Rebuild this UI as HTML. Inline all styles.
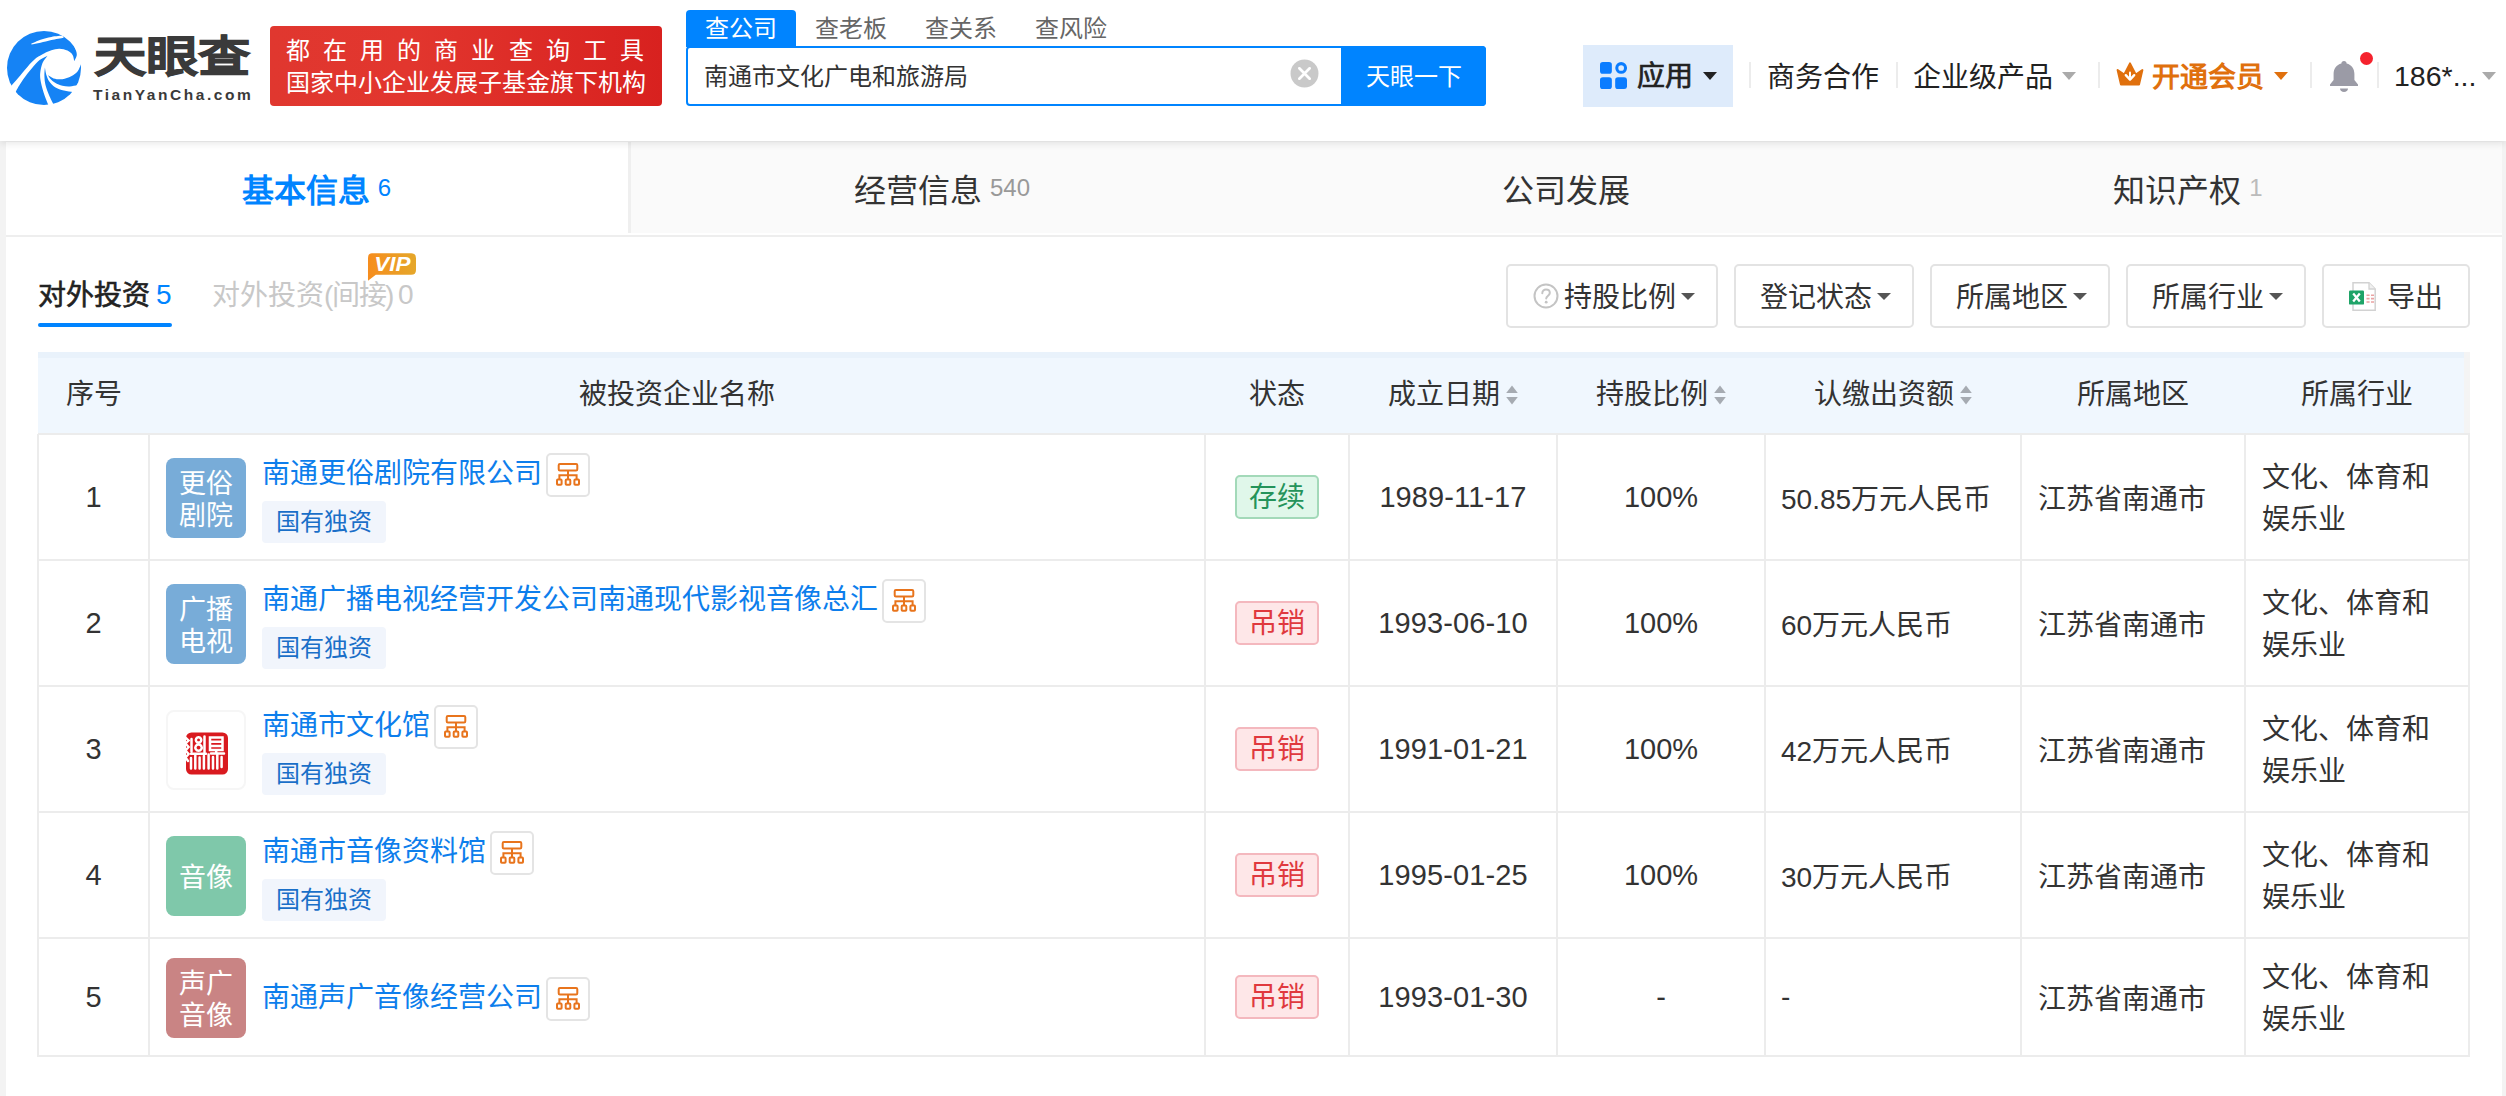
<!DOCTYPE html>
<html lang="zh-CN">
<head>
<meta charset="utf-8">
<title>天眼查 - 南通市文化广电和旅游局 - 对外投资</title>
<style>
*{box-sizing:border-box;margin:0;padding:0}
html,body{width:2506px;height:1096px;overflow:hidden;background:#f3f3f3}
body{position:relative;font-family:"Liberation Sans",sans-serif;color:#333;font-size:28px;-webkit-font-smoothing:antialiased}
.abs{position:absolute}
.c{display:flex;align-items:center;justify-content:center;white-space:nowrap}
.l{display:flex;align-items:center;justify-content:flex-start;white-space:nowrap}
/* ---------- header ---------- */
#hdr{position:absolute;left:0;top:0;width:2506px;height:141px;background:#fff;box-shadow:0 2px 8px rgba(0,0,0,.11);z-index:5}
#logo{position:absolute;left:7px;top:31px;width:74px;height:74px}
#brand{position:absolute;left:100px;top:28px;width:144px;height:60px;font-size:48px;font-weight:900;color:#3a3a3a;line-height:60px;letter-spacing:0;white-space:nowrap;text-align:center;transform:scale(1.09,.9);transform-origin:50% 50%;-webkit-text-stroke:1.1px #3a3a3a}
#brand2{position:absolute;left:93px;top:85px;width:162px;height:20px;font-size:15.5px;font-weight:700;color:#3a3a3a;line-height:20px;letter-spacing:2.55px;white-space:nowrap}
#banner{position:absolute;left:270px;top:26px;width:392px;height:80px;border-radius:4px;background:linear-gradient(90deg,#e0372f 0%,#e2362e 35%,#d8211f 100%);color:#fff;font-size:24px;line-height:32px;padding:9px 0 0 16px;white-space:nowrap;overflow:hidden}
#banner .a{letter-spacing:13.1px;height:32px;overflow:hidden}
#banner .b{letter-spacing:0;height:32px;overflow:hidden}
/* search */
#stabs{position:absolute;left:686px;top:10px;height:37px;width:500px}
#stabs .t{position:absolute;top:0;height:37px;width:110px;font-size:24px;color:#666;padding-bottom:5px}
#stabs .on{background:#0084ff;color:#fff;border-radius:4px 4px 0 0}
#sbox{position:absolute;left:686px;top:46px;width:800px;height:60px;border:2px solid #0084ff;border-radius:4px;background:#fff}
#sbox .q{position:absolute;left:16px;top:-2px;height:56px;font-size:24px;color:#333}
#sbox .x{position:absolute;left:602px;top:11px;width:29px;height:29px}
#sbox .go{position:absolute;right:-2px;top:-2px;width:145px;height:60px;background:#0084ff;color:#fff;font-size:24px;border-radius:0 4px 4px 0;padding-bottom:4px}
/* right nav */
#app{position:absolute;left:1583px;top:45px;width:150px;height:62px;background:#deebfb}
.nav{position:absolute;top:53px;height:44px;font-size:28px;color:#222}
.sep{position:absolute;top:62px;width:2px;height:26px;background:#ececec}
.car{position:absolute;width:0;height:0;border-left:7px solid transparent;border-right:7px solid transparent;border-top:8px solid #333}
/* ---------- main ---------- */
#main{position:absolute;left:6px;top:142px;width:2496px;height:960px;background:#fff}
#tabs{position:absolute;left:0;top:0;width:2496px;height:95px;background:linear-gradient(#fafafa 0,#fafafa 91px,#fff 91px,#fff 93px,#eeeeee 93px)}
#tabs .tb{position:absolute;top:0;height:91px;width:624px;font-size:32px;color:#333}
#tabs .tb small{font-size:24px;color:#999;margin-left:8px;font-weight:400;position:relative;top:0px}
#tabs .on{background:#fff;color:#0084ff;font-weight:700;border-right:3px solid #efefef;width:625px;padding-right:1px}
#tabs .on small{color:#0084ff}
/* sub tabs */
.st{position:absolute;top:129px;height:44px;font-size:28px}
#uline{position:absolute;left:32px;top:181px;width:134px;height:4px;background:#0084ff;border-radius:2px}
.fb{position:absolute;top:122px;height:64px;border:2px solid #e3e3e3;border-radius:5px;background:#fff;font-size:28px;color:#333;padding:0 0 2px 3px}
.fb .car{position:static;margin-left:5px;margin-top:3px;border-top-color:#555;border-left-width:7.5px;border-right-width:7.5px;border-top-width:7.5px}

/* ---------- table ---------- */
#tbl{position:absolute;left:32px;top:210px;width:2432px;height:706px}
#th{position:absolute;left:0;top:0;width:2432px;height:82px;background:linear-gradient(#e9f2fb 0,#e9f2fb 6px,#f0f7fe 6px);border-right:6px solid #f4f4f4}
#th>div{position:absolute;top:0;height:82px;font-size:28px;color:#333;padding-bottom:3px}
.vl{position:absolute;top:82px;width:2px;height:623px;background:#ececec}
.hl{position:absolute;left:0;width:2432px;height:2px;background:#ececec}
.r{position:absolute;left:0;width:2432px;height:126px}
.r>div{position:absolute}
.r .i{left:0;width:111px;top:0;height:100%;font-size:29px}
.r .lg{left:128px;top:24px;width:80px;height:80px;border-radius:8px;color:#fff;font-size:27px;line-height:32px;text-align:center;display:flex;align-items:center;justify-content:center;white-space:nowrap;padding-top:3px}
.r .nm{left:224px;top:15px;height:44px;color:#0d7eec;font-size:28px}
.r .ob{width:44px;height:44px;border:2px solid #e4e4e4;border-radius:5px;margin-left:4px;position:relative;top:3.5px;background:#fff;display:flex;align-items:center;justify-content:center;flex:none}
.r .ob svg{width:24px;height:23px;display:block}
.r .tg{left:224px;top:67px;width:124px;height:42px;background:#f1f5fc;border-radius:4px;color:#1a6fc8;font-size:24px;padding-bottom:6px}
.r .sg{left:1197px;top:41px;width:84px;height:44px;border-radius:5px;font-size:28px;border:2px solid;padding-bottom:5px}
.r .ok{background:#e0f7ea;border-color:#a3d9b9;color:#24935a}
.r .no{background:#fee7e8;border-color:#f4b8be;color:#e0393e}
.r .d{left:1311px;width:208px;top:0;height:100%;font-size:29px;letter-spacing:.1px;padding-top:1px}
.r .p{left:1519px;width:208px;top:0;height:100%;font-size:29px;padding-top:1px}
.r .m{left:1743px;top:0;height:100%;padding-bottom:1px}
.r .g{left:2000px;top:0;height:100%;padding-bottom:1px}
.r .y{left:2224px;top:0;height:100%;line-height:42px;display:flex;align-items:center;white-space:nowrap;padding-top:3px}
.sort{display:inline-block;width:12px;height:20px;margin-left:6px;position:relative;top:3px}
.j{display:inline-block;white-space:nowrap;flex:none;text-align:justify;text-align-last:justify}
</style>
</head>
<body>

<!-- ================= HEADER ================= -->
<div id="hdr">
  <svg id="logo" viewBox="0 0 74 74">
    <defs><clipPath id="lc"><circle cx="37" cy="37" r="37"/></clipPath></defs>
    <g clip-path="url(#lc)" fill="#1583f5">
      <path d="M3.7 55.4 C4.9 54.0 8.1 50.5 10.9 47.2 C13.6 44.0 17.3 39.3 20.4 35.9 C23.4 32.6 26.3 29.4 29.1 27.1 C32.0 24.9 36.1 23.0 37.5 22.2 C38.7 21.7 42.0 20.0 44.4 19.3 C46.9 18.5 49.8 17.6 52.5 17.7 C55.2 17.7 58.3 18.6 60.5 19.6 C62.7 20.7 64.5 22.2 65.6 24.0 C66.7 25.8 67.0 29.2 67.2 30.2 C67.6 29.4 69.3 26.7 69.6 25.1 C70.0 23.5 69.7 22.0 69.3 20.4 C68.8 18.7 67.4 16.1 67.1 15.2 L80 10 L80 -5 L-5 -5 L-5 62 Z"/>
      <path d="M24.4 12.6 C25.9 12.0 30.2 9.8 33.5 8.7 C36.8 7.6 40.6 6.6 44.4 5.9 C48.3 5.2 54.5 4.8 56.5 4.6 L56.5 6.8 C54.5 7.2 48.3 8.3 44.4 9.1 C40.6 10.0 36.8 11.1 33.5 11.8 C30.2 12.5 25.9 13.2 24.4 13.5 Z" fill="#fff"/>
      <path d="M40.5 24.7 C39.2 25.5 35.2 27.0 32.6 29.1 C30.0 31.2 27.5 34.3 24.7 37.5 C22.0 40.7 18.7 44.9 16.1 48.5 C13.6 52.0 10.6 57.3 9.6 59.0 L0 80 L46 80 L41.5 74.4 C40.9 72.7 38.8 67.9 37.5 64.2 C36.3 60.4 34.7 55.4 34.0 51.7 C33.3 48.1 32.9 45.5 33.2 42.3 C33.5 39.0 34.3 35.0 35.5 32.0 C36.8 29.1 39.7 26.0 40.5 24.7 Z"/>
      <path d="M37.9 36.4 C38.1 37.6 38.6 41.3 39.3 43.7 C40.1 46.1 40.8 48.6 42.3 50.6 C43.7 52.7 45.7 54.8 48.1 56.3 C50.5 57.8 53.9 58.8 56.9 59.6 C59.8 60.4 64.2 60.8 65.6 61.1 L72 72 L50 80 L46.5 73.3 C45.8 71.8 43.4 67.4 42.1 64.2 C40.8 60.9 39.3 57.2 38.5 53.9 C37.7 50.6 37.5 47.4 37.4 44.4 C37.3 41.5 37.8 37.8 37.9 36.4 Z"/>
      <path d="M40.8 44.1 C41.8 44.6 44.2 46.7 46.6 47.4 C49.1 48.1 52.5 48.6 55.4 48.2 C58.3 47.9 61.6 46.7 64.2 45.3 C66.7 44.0 69.1 42.2 70.7 40.2 C72.3 38.2 73.3 34.6 73.8 33.5 L80 34 L80 56 L70.4 54.3 C69.1 54.5 65.2 55.3 62.7 55.4 C60.2 55.5 57.8 55.3 55.4 54.7 C53.0 54.1 50.2 53.0 48.1 51.7 C46.0 50.5 44.2 48.6 43.0 47.4 C41.8 46.1 41.2 44.6 40.8 44.1 Z"/>
    </g>
  </svg>
  <div id="brand"><span class="j" style="width:144px">天眼查</span></div>
  <div id="brand2">TianYanCha.com</div>
  <div id="banner"><div class="a"><span class="j" style="width:371px">都在用的商业查询工具</span></div><div class="b"><span class="j" style="width:360px">国家中小企业发展子基金旗下机构</span></div></div>

  <div id="stabs">
    <div class="t c on" style="left:0"><span class="j" style="width:72px">查公司</span></div>
    <div class="t c" style="left:110px"><span class="j" style="width:72px">查老板</span></div>
    <div class="t c" style="left:220px"><span class="j" style="width:72px">查关系</span></div>
    <div class="t c" style="left:330px"><span class="j" style="width:72px">查风险</span></div>
  </div>
  <div id="sbox">
    <div class="q l"><span class="j" style="width:264px">南通市文化广电和旅游局</span></div>
    <svg class="x" viewBox="0 0 28 28"><circle cx="14" cy="14" r="13.5" fill="#c9c9c9"/><path d="M9 9 L19 19 M19 9 L9 19" stroke="#fff" stroke-width="2.6" stroke-linecap="round"/></svg>
    <div class="go c"><span class="j" style="width:96px">天眼一下</span></div>
  </div>

  <div id="app"></div>
  <svg class="abs" style="left:1599.5px;top:62px;width:27.5px;height:27.5px" viewBox="0 0 29 29">
    <rect x="0" y="0" width="12.5" height="12.5" rx="3" fill="#0a7cff"/>
    <rect x="0" y="16" width="12.5" height="12.5" rx="3" fill="#0a7cff"/>
    <rect x="16" y="16" width="12.5" height="12.5" rx="3" fill="#0a7cff"/>
    <circle cx="22.3" cy="6.3" r="4.6" fill="none" stroke="#0a7cff" stroke-width="3.2"/>
  </svg>
  <div class="nav l" style="left:1637px;top:52px;color:#222;-webkit-text-stroke:.7px #222"><span class="j" style="width:56px">应用</span></div>
  <div class="car" style="left:1703px;top:72px;border-top-color:#222"></div>
  <div class="sep" style="left:1749px"></div>
  <div class="nav l" style="left:1767px"><span class="j" style="width:112px">商务合作</span></div>
  <div class="sep" style="left:1896px"></div>
  <div class="nav l" style="left:1913px"><span class="j" style="width:140px">企业级产品</span></div>
  <div class="car" style="left:2062px;top:72px;border-top-color:#aaa"></div>
  <div class="sep" style="left:2098px"></div>
  <svg class="abs" style="left:2116px;top:62px;width:28px;height:24px" viewBox="0 0 28 24">
    <path d="M1.6 8 L8.2 12.6 L14 1.4 L19.8 12.6 L26.4 8 L23 22.6 L5 22.6 Z" fill="#e0700d" stroke="#e0700d" stroke-width="2" stroke-linejoin="round"/>
    <path d="M9.8 13.2 L14 17.6 L18.2 13.2" fill="none" stroke="#fff" stroke-width="2.4" stroke-linecap="round" stroke-linejoin="round"/>
    <path d="M14 10.5 V15" stroke="#fff" stroke-width="2" stroke-linecap="round"/>
  </svg>
  <div class="nav l" style="left:2152px;font-weight:700;color:#e0700d"><span class="j" style="width:112px">开通会员</span></div>
  <div class="car" style="left:2274px;top:72px;border-top-color:#e0700d"></div>
  <div class="sep" style="left:2310px"></div>
  <svg class="abs" style="left:2328px;top:59px;width:32px;height:34px" viewBox="0 0 32 34">
    <path d="M16 2 C17.6 2 18.6 3 18.6 4.4 C23.6 5.6 26.4 9.6 26.4 15 L26.4 21 L30 25.4 L30 27 L2 27 L2 25.4 L5.6 21 L5.6 15 C5.6 9.6 8.4 5.6 13.4 4.4 C13.4 3 14.4 2 16 2 Z" fill="#9b9ba6"/>
    <path d="M12 29.5 L20 29.5 C20 31.6 18.2 33 16 33 C13.8 33 12 31.6 12 29.5 Z" fill="#9b9ba6"/>
  </svg>
  <div class="abs" style="left:2360px;top:52px;width:13px;height:13px;border-radius:50%;background:#f5222d"></div>
  <div class="sep" style="left:2377px"></div>
  <div class="nav l" style="left:2394px;top:54px;font-size:28.5px">186*...</div>
  <div class="car" style="left:2482px;top:72px;border-top-color:#aaa"></div>
</div>

<!-- ================= MAIN ================= -->
<div id="main">
  <div id="tabs">
    <div class="tb c on" style="left:0"><span class="j" style="width:128px">基本信息</span><small>6</small></div>
    <div class="tb c" style="left:624px"><span class="j" style="width:128px">经营信息</span><small>540</small></div>
    <div class="tb c" style="left:1248px"><span class="j" style="width:128px">公司发展</span></div>
    <div class="tb c" style="left:1872px;padding-right:4px"><span class="j" style="width:128px">知识产权</span><small style="color:#bbb">1</small></div>
  </div>

  <div class="st l" style="left:32px;color:#222;-webkit-text-stroke:.6px #222"><span class="j" style="width:112px">对外投资</span><span style="color:#0084ff;font-weight:400;margin-left:6px;-webkit-text-stroke:0;position:relative;top:1.5px">5</span></div>
  <div id="uline"></div>
  <div class="st l" style="left:206px;color:#c8c8c8"><span class="j" style="width:112px">对外投资</span><span style="letter-spacing:-1.4px"><span class="j" style="width:69.06px">(间接)</span></span><span style="margin-left:5px;position:relative;top:2px">0</span></div>
  <svg class="abs" style="left:361px;top:111px;width:49px;height:28px" viewBox="0 0 50 28">
    <defs><linearGradient id="vg" x1="0" y1="0" x2="1" y2="0"><stop offset="0" stop-color="#f68d1e"/><stop offset="1" stop-color="#e5a72a"/></linearGradient></defs>
    <path d="M5 0 H45 Q50 0 50 5 V17 Q50 22 45 22 H9 L1 28 V5 Q1 0 5 0 Z" fill="url(#vg)"/>
    <text x="26" y="18.5" font-family="Liberation Sans, sans-serif" font-size="21" font-weight="700" font-style="italic" fill="#fff" text-anchor="middle" textLength="37" lengthAdjust="spacingAndGlyphs">VIP</text>
  </svg>

  <div class="fb c" style="left:1500px;width:212px;padding-left:3px">
    <svg style="width:26px;height:26px;margin-right:5px;margin-top:1px" viewBox="0 0 26 26"><circle cx="13" cy="13" r="11.5" fill="none" stroke="#c4c4c4" stroke-width="2"/><path d="M9.3 10.3 C9.3 7.8 11 6.6 13 6.6 C15.2 6.6 16.8 8 16.8 10 C16.8 12.6 13.2 12.8 13.2 15.6" fill="none" stroke="#c4c4c4" stroke-width="2" stroke-linecap="round"/><circle cx="13.2" cy="19.2" r="1.4" fill="#c4c4c4"/></svg><span class="j" style="width:112px">持股比例</span><span class="car"></span></div>
  <div class="fb c" style="left:1728px;width:180px"><span class="j" style="width:112px">登记状态</span><span class="car"></span></div>
  <div class="fb c" style="left:1924px;width:180px"><span class="j" style="width:112px">所属地区</span><span class="car"></span></div>
  <div class="fb c" style="left:2120px;width:180px"><span class="j" style="width:112px">所属行业</span><span class="car"></span></div>
  <div class="fb c" style="left:2316px;width:148px;padding:0 1px 2px 0">
    <svg style="width:27px;height:29px;margin-right:11px;margin-top:3px" viewBox="0 0 27 29">
      <path d="M4 .8H20L26.2 7V28.2H4Z" fill="#fff" stroke="#d2d2d2" stroke-width="1.5"/>
      <path d="M20 .8V7H26.2" fill="#f0f0f0" stroke="#d2d2d2" stroke-width="1.3"/>
      <path d="M17.5 13.2H20.6M22 13.2H25M17.5 16.6H20.6M22 16.6H25M17.5 20H20.6M22 20H25" stroke="#eaa3a3" stroke-width="1.6"/>
      <rect x="0" y="8.4" width="15" height="14.2" rx="1.2" fill="#1fa468"/>
      <path d="M4.2 11.6L10.8 19.4M10.8 11.6L4.2 19.4" stroke="#fff" stroke-width="2.3"/>
    </svg><span class="j" style="width:56px">导出</span></div>

  <!-- TABLE -->
  <div id="tbl">
<div id="th">
<div class="c" style="left:0;width:111px"><span class="j" style="width:56px">序号</span></div>
<div class="c" style="left:111px;width:1056px"><span class="j" style="width:196px">被投资企业名称</span></div>
<div class="c" style="left:1167px;width:144px"><span class="j" style="width:56px">状态</span></div>
<div class="c" style="left:1311px;width:208px"><span class="j" style="width:112px">成立日期</span><svg class="sort" viewBox="0 0 12 20"><path d="M6 0.5 L11.8 8 H0.2 Z" fill="#a6abb2"/><path d="M6 19.5 L11.8 12 H0.2 Z" fill="#a6abb2"/></svg></div>
<div class="c" style="left:1519px;width:208px"><span class="j" style="width:112px">持股比例</span><svg class="sort" viewBox="0 0 12 20"><path d="M6 0.5 L11.8 8 H0.2 Z" fill="#a6abb2"/><path d="M6 19.5 L11.8 12 H0.2 Z" fill="#a6abb2"/></svg></div>
<div class="c" style="left:1727px;width:256px"><span class="j" style="width:140px">认缴出资额</span><svg class="sort" viewBox="0 0 12 20"><path d="M6 0.5 L11.8 8 H0.2 Z" fill="#a6abb2"/><path d="M6 19.5 L11.8 12 H0.2 Z" fill="#a6abb2"/></svg></div>
<div class="c" style="left:1983px;width:224px"><span class="j" style="width:112px">所属地区</span></div>
<div class="c" style="left:2207px;width:224px"><span class="j" style="width:112px">所属行业</span></div>
</div>
<div class="r" style="top:82px;height:126px">
<div class="i c">1</div>
<div class="lg" style="background:#78acd8;top:24px"><div><span class="j" style="width:54px">更俗</span><br><span class="j" style="width:54px">剧院</span></div></div>
<div class="nm l"><span class="j" style="width:280px">南通更俗剧院有限公司</span><span class="ob"><svg viewBox="0 0 24 23"><g fill="none" stroke="#e8741c" stroke-width="2"><rect x="2.7" y="1" width="18.6" height="6.4" rx="1.2"/><path d="M12 7.4V16M3.4 16V12.2H20.6V16"/><rect x="1" y="16.6" width="4.6" height="5.2" rx=".8"/><rect x="9.7" y="16.6" width="4.6" height="5.2" rx=".8"/><rect x="18.4" y="16.6" width="4.6" height="5.2" rx=".8"/></g></svg></span></div>
<div class="tg c"><span class="j" style="width:96px">国有独资</span></div>
<div class="sg c ok" style="top:41px"><span class="j" style="width:56px">存续</span></div>
<div class="d c">1989-11-17</div><div class="p c">100%</div><div class="m l"><span class="j" style="width:210.08px">50.85万元人民币</span></div><div class="g l"><span class="j" style="width:168px">江苏省南通市</span></div><div class="y"><div><span class="j" style="width:168px">文化、体育和</span><br><span class="j" style="width:84px">娱乐业</span></div></div>
</div>
<div class="r" style="top:208px;height:126px">
<div class="i c">2</div>
<div class="lg" style="background:#78acd8;top:24px"><div><span class="j" style="width:54px">广播</span><br><span class="j" style="width:54px">电视</span></div></div>
<div class="nm l"><span class="j" style="width:616px">南通广播电视经营开发公司南通现代影视音像总汇</span><span class="ob"><svg viewBox="0 0 24 23"><g fill="none" stroke="#e8741c" stroke-width="2"><rect x="2.7" y="1" width="18.6" height="6.4" rx="1.2"/><path d="M12 7.4V16M3.4 16V12.2H20.6V16"/><rect x="1" y="16.6" width="4.6" height="5.2" rx=".8"/><rect x="9.7" y="16.6" width="4.6" height="5.2" rx=".8"/><rect x="18.4" y="16.6" width="4.6" height="5.2" rx=".8"/></g></svg></span></div>
<div class="tg c"><span class="j" style="width:96px">国有独资</span></div>
<div class="sg c no" style="top:41px"><span class="j" style="width:56px">吊销</span></div>
<div class="d c">1993-06-10</div><div class="p c">100%</div><div class="m l"><span class="j" style="width:171.16px">60万元人民币</span></div><div class="g l"><span class="j" style="width:168px">江苏省南通市</span></div><div class="y"><div><span class="j" style="width:168px">文化、体育和</span><br><span class="j" style="width:84px">娱乐业</span></div></div>
</div>
<div class="r" style="top:334px;height:126px">
<div class="i c">3</div>
<div class="lg" style="background:#fff;border:2px solid #f6f6f6;top:24px"><svg viewBox="0 0 44 44" style="width:44px;height:44px;position:relative;left:1px;top:1px"><rect x="1" y="1.5" width="42" height="42" rx="5.5" fill="#d91a1f"/><g stroke="#fff" stroke-width="2.5" fill="none" stroke-linecap="round"><path d="M6 27V37.5M10.3 24.5V37.5M14.6 26.5V37.5M18.9 25V37.5M23.6 23.5V37.5M28 26V37.5M32.3 23.5V37.5M36.6 26V36"/><path d="M13.5 6.2a2.7 2.7 0 1 0 .1 0M13.5 13.4a3.2 3.2 0 1 0 .1 0M6.5 8V20.5M19.5 5.5V21M6 22.8H21"/><path d="M25 6.5H37.5V19H25ZM25 10.7H37.5M25 14.9H37.5M31.2 19V22.5M26 22.5H39"/><path d="M.5 6.5L3.6 9.5L.5 12.5L3.6 16L.5 19.5L3.6 23L.5 26.5L3 30" stroke-width="2.4"/></g></svg></div>
<div class="nm l"><span class="j" style="width:168px">南通市文化馆</span><span class="ob"><svg viewBox="0 0 24 23"><g fill="none" stroke="#e8741c" stroke-width="2"><rect x="2.7" y="1" width="18.6" height="6.4" rx="1.2"/><path d="M12 7.4V16M3.4 16V12.2H20.6V16"/><rect x="1" y="16.6" width="4.6" height="5.2" rx=".8"/><rect x="9.7" y="16.6" width="4.6" height="5.2" rx=".8"/><rect x="18.4" y="16.6" width="4.6" height="5.2" rx=".8"/></g></svg></span></div>
<div class="tg c"><span class="j" style="width:96px">国有独资</span></div>
<div class="sg c no" style="top:41px"><span class="j" style="width:56px">吊销</span></div>
<div class="d c">1991-01-21</div><div class="p c">100%</div><div class="m l"><span class="j" style="width:171.16px">42万元人民币</span></div><div class="g l"><span class="j" style="width:168px">江苏省南通市</span></div><div class="y"><div><span class="j" style="width:168px">文化、体育和</span><br><span class="j" style="width:84px">娱乐业</span></div></div>
</div>
<div class="r" style="top:460px;height:126px">
<div class="i c">4</div>
<div class="lg" style="background:#7fc8aa;top:24px"><div><span class="j" style="width:54px">音像</span></div></div>
<div class="nm l"><span class="j" style="width:224px">南通市音像资料馆</span><span class="ob"><svg viewBox="0 0 24 23"><g fill="none" stroke="#e8741c" stroke-width="2"><rect x="2.7" y="1" width="18.6" height="6.4" rx="1.2"/><path d="M12 7.4V16M3.4 16V12.2H20.6V16"/><rect x="1" y="16.6" width="4.6" height="5.2" rx=".8"/><rect x="9.7" y="16.6" width="4.6" height="5.2" rx=".8"/><rect x="18.4" y="16.6" width="4.6" height="5.2" rx=".8"/></g></svg></span></div>
<div class="tg c"><span class="j" style="width:96px">国有独资</span></div>
<div class="sg c no" style="top:41px"><span class="j" style="width:56px">吊销</span></div>
<div class="d c">1995-01-25</div><div class="p c">100%</div><div class="m l"><span class="j" style="width:171.16px">30万元人民币</span></div><div class="g l"><span class="j" style="width:168px">江苏省南通市</span></div><div class="y"><div><span class="j" style="width:168px">文化、体育和</span><br><span class="j" style="width:84px">娱乐业</span></div></div>
</div>
<div class="r" style="top:586px;height:118px">
<div class="i c">5</div>
<div class="lg" style="background:#c98484;top:20px"><div><span class="j" style="width:54px">声广</span><br><span class="j" style="width:54px">音像</span></div></div>
<div class="nm l" style="top:35px"><span class="j" style="width:280px">南通声广音像经营公司</span><span class="ob"><svg viewBox="0 0 24 23"><g fill="none" stroke="#e8741c" stroke-width="2"><rect x="2.7" y="1" width="18.6" height="6.4" rx="1.2"/><path d="M12 7.4V16M3.4 16V12.2H20.6V16"/><rect x="1" y="16.6" width="4.6" height="5.2" rx=".8"/><rect x="9.7" y="16.6" width="4.6" height="5.2" rx=".8"/><rect x="18.4" y="16.6" width="4.6" height="5.2" rx=".8"/></g></svg></span></div>
<div class="sg c no" style="top:37px"><span class="j" style="width:56px">吊销</span></div>
<div class="d c">1993-01-30</div><div class="p c">-</div><div class="m l">-</div><div class="g l"><span class="j" style="width:168px">江苏省南通市</span></div><div class="y"><div><span class="j" style="width:168px">文化、体育和</span><br><span class="j" style="width:84px">娱乐业</span></div></div>
</div>
<div class="vl" style="left:-1px"></div>
<div class="vl" style="left:110px"></div>
<div class="vl" style="left:1166px"></div>
<div class="vl" style="left:1310px"></div>
<div class="vl" style="left:1518px"></div>
<div class="vl" style="left:1726px"></div>
<div class="vl" style="left:1982px"></div>
<div class="vl" style="left:2206px"></div>
<div class="vl" style="left:2430px"></div>
<div class="hl" style="top:81px"></div>
<div class="hl" style="top:207px"></div>
<div class="hl" style="top:333px"></div>
<div class="hl" style="top:459px"></div>
<div class="hl" style="top:585px"></div>
<div class="hl" style="top:703px"></div>
</div>
</div>
</body>
</html>
